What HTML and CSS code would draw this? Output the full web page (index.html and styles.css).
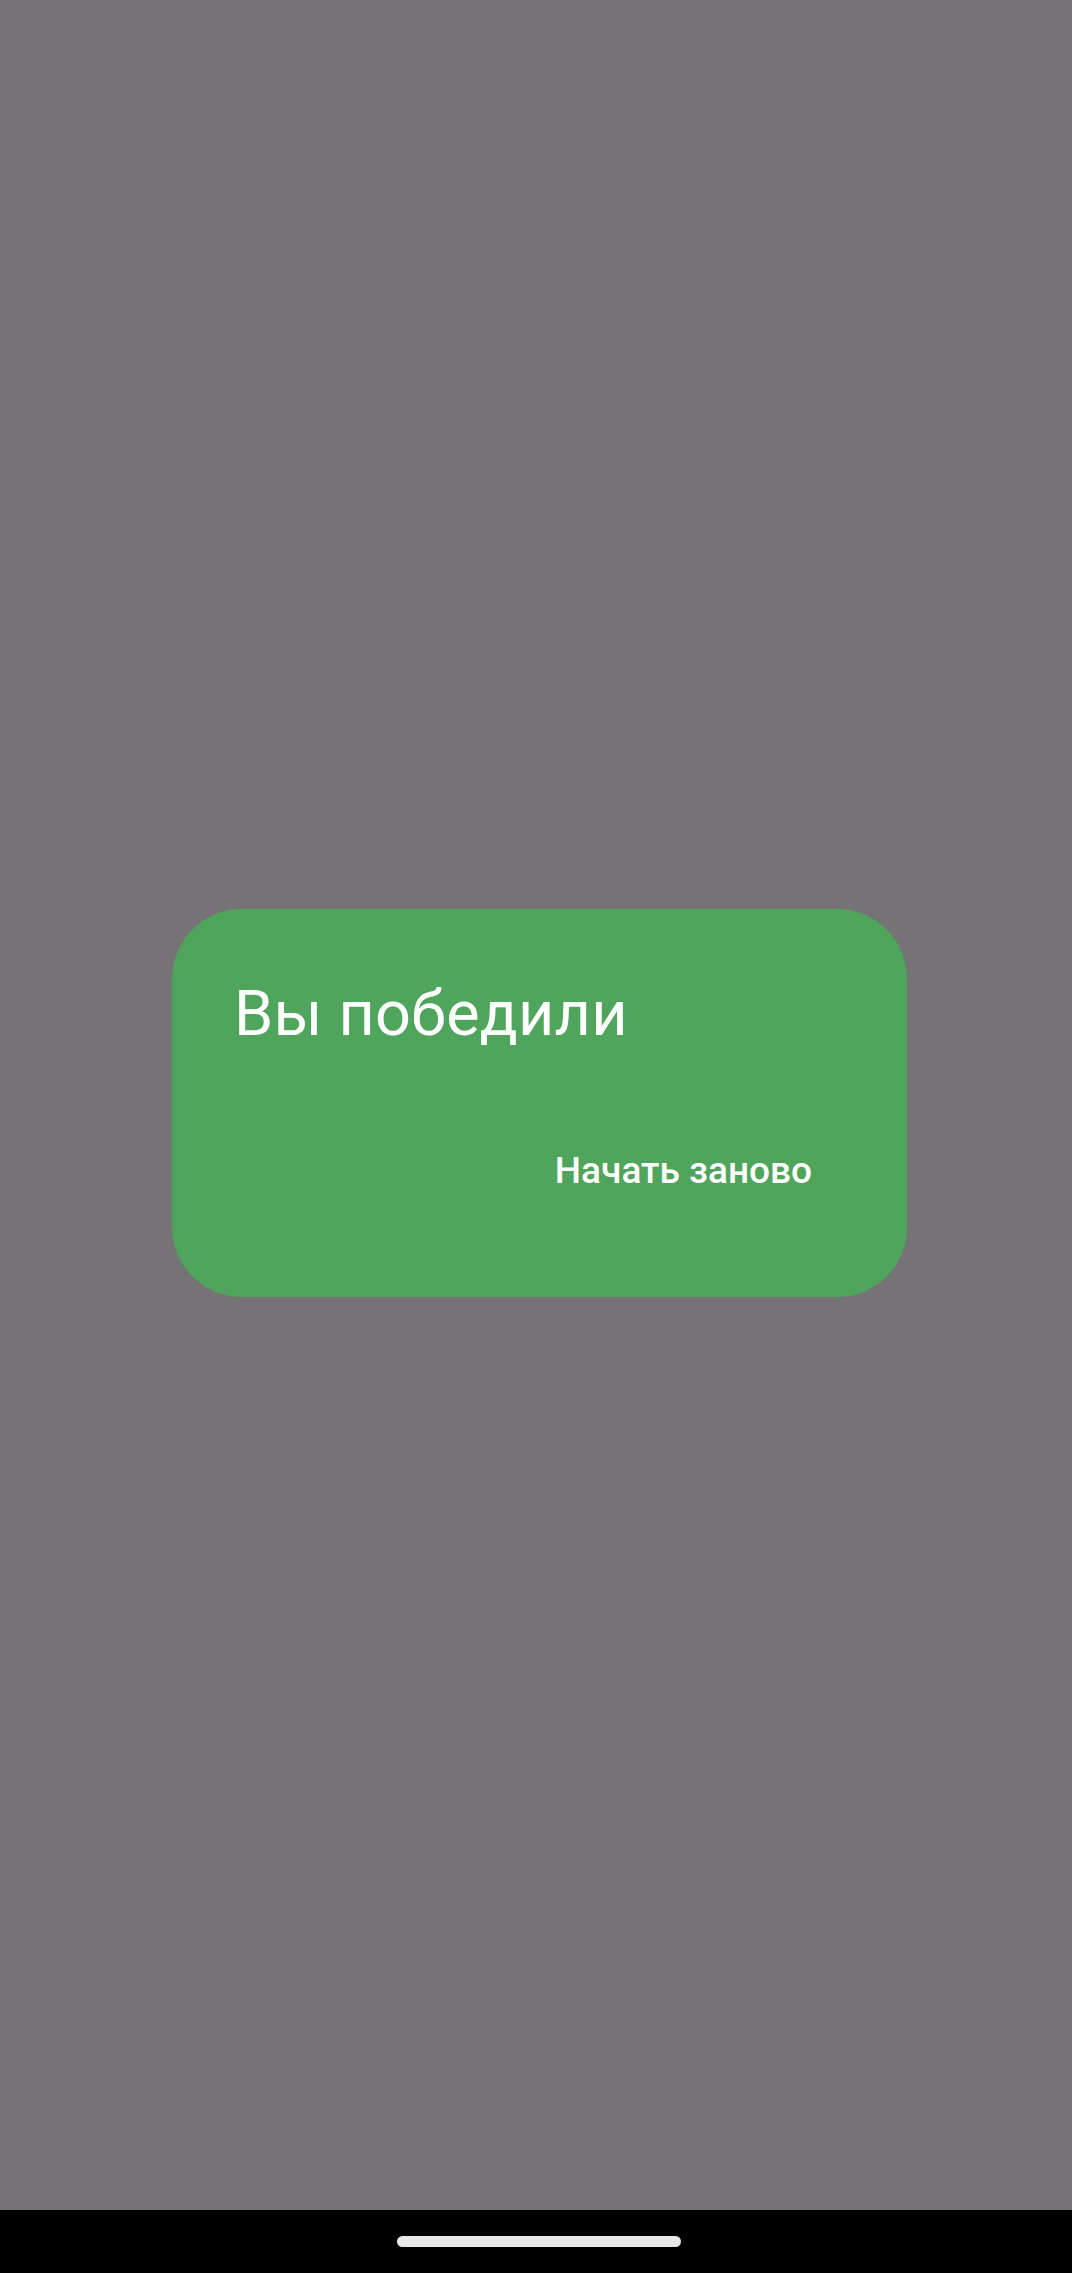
FILE: index.html
```html
<!DOCTYPE html>
<html lang="ru">
<head>
<meta charset="utf-8">
<link rel="stylesheet" href="styles.css">
</head>
<body>
<div class="screen">
  <main class="scrim">
    <section class="dialog">
      <h1 class="title">Вы победили</h1>
      <div class="actions">
        <button class="btn">Начать заново</button>
      </div>
    </section>
  </main>
  <footer class="navbar"><div class="handle"></div></footer>
</div>
</body>
</html>
```
FILE: styles.css
```css
html, body { margin: 0; padding: 0; }
body { font-family: Roboto, "Noto Sans", sans-serif; background: #000; }
.screen { width: 1072px; height: 2273px; display: flex; flex-direction: column; }
.scrim { height: 2210px; background: #767376; padding: 909px 0 0 172px; box-sizing: border-box; }
.dialog {
  width: 735px; height: 388px; box-sizing: border-box;
  background: #4fa55b; border-radius: 70px;
  padding: 68px 0 0 62px;
  display: flex; flex-direction: column;
}
.title { margin: 0; font-size: 63px; line-height: 74px; font-weight: 400; color: #fff; letter-spacing: 0.2px; }
.actions { display: flex; justify-content: flex-end; margin-top: 98px; padding-right: 95px; }
.btn {
  background: none; border: 0; padding: 0; margin: 0;
  font-family: Roboto, sans-serif; font-size: 37px; line-height: 44px; font-weight: 500;
  color: #fff; letter-spacing: 0;
}
.navbar { height: 63px; background: #000; display: flex; justify-content: center; align-items: flex-start; padding-left: 6px; }
.handle { width: 284px; height: 11px; border-radius: 6px; background: #e8e8e8; margin-top: 26px; }
```
